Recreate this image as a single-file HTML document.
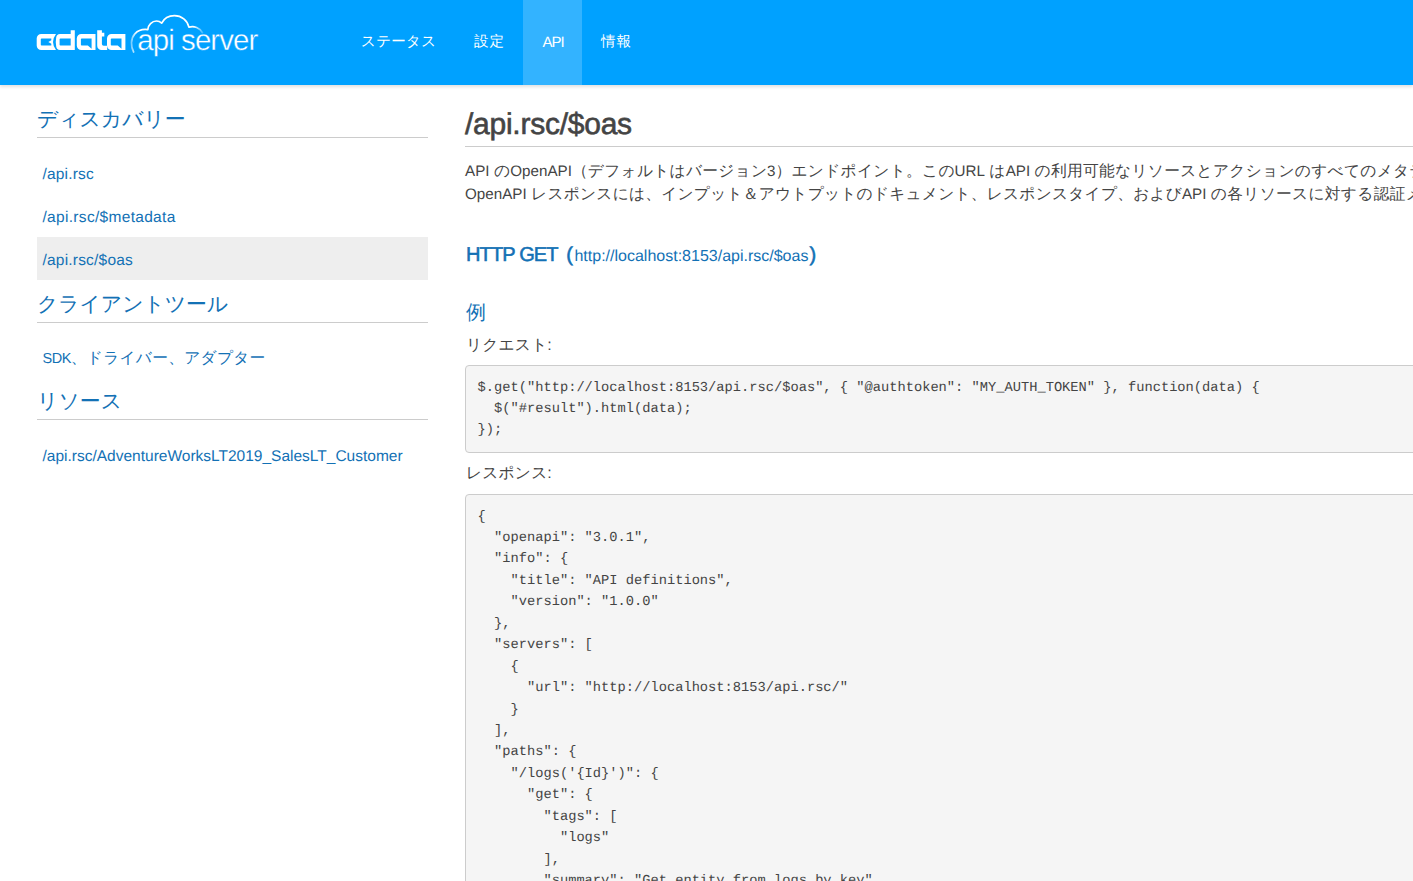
<!DOCTYPE html>
<html lang="ja">
<head>
<meta charset="utf-8">
<title>CData API Server</title>
<style>
*{box-sizing:border-box}
html,body{margin:0;padding:0}
body{width:1413px;height:881px;overflow:hidden;background:#fff;font-family:"Liberation Sans",sans-serif;font-size:16px;color:#444;position:relative;text-rendering:geometricPrecision}
a{text-decoration:none;color:#1371b5}
.j{display:inline-block;text-align:justify;text-align-last:justify;white-space:nowrap;vertical-align:baseline;letter-spacing:0}
#hdr{position:absolute;left:0;top:0;width:1413px;height:85px;background:#00a1ff;box-shadow:0 2px 3px rgba(0,0,0,.12)}
#logo{position:absolute;left:30px;top:10px}
#nav{position:absolute;left:342px;top:0;margin:0;padding:0;list-style:none;height:85px;white-space:nowrap}
#nav li{position:absolute;top:0;height:85px;line-height:83px;color:#fff;font-size:15px;text-align:center}
#nav li .j{font-size:14.5px}
#nav li.on{background:#33b3ff}
#side{position:absolute;left:37px;top:85px;width:391px}
.sh{position:absolute;left:0;width:391px;height:34px;border-bottom:1px solid #ccc;color:#1371b5;font-size:20.8px;line-height:32px;margin:0;font-weight:400;white-space:nowrap}
.si{position:absolute;left:0;width:391px;height:43px;line-height:43px;padding-left:5.5px;padding-top:2px;font-size:15.5px;color:#1371b5;white-space:nowrap}
.si.on{background:#eee}
.si .j{font-size:15.75px}
#main{position:absolute;left:465px;top:85px;width:1400px}
h1{position:absolute;left:0;top:17px;width:1400px;height:45px;margin:0;border-bottom:1px solid #ccc;font-size:30px;font-weight:400;line-height:45px;color:#444;-webkit-text-stroke:0.6px #444;letter-spacing:-0.25px;white-space:nowrap}
p.d{position:absolute;left:0;top:75px;margin:0;font-size:16px;line-height:23px;white-space:nowrap;color:#444}
p.d .j,.lb .j{font-size:15.75px}
.l{font-size:15.2px}
h2.hh{position:absolute;left:1px;top:155px;margin:0;font-size:20px;font-weight:400;line-height:30px;color:#1371b5;white-space:nowrap;-webkit-text-stroke:.55px #1371b5}
h2.hh a{font-size:16px;font-weight:400;-webkit-text-stroke:0;margin:0 1px 0 1.5px}
h2.hh .hg{letter-spacing:-.85px}
h4{position:absolute;left:1px;top:213px;margin:0;font-size:20px;font-weight:400;line-height:30px;color:#1371b5}
.lb{position:absolute;left:1px;margin:0;font-size:16px;line-height:23px;color:#444;white-space:nowrap}
pre{position:absolute;left:0;margin:0;width:1400px;padding:11.6px 11px 10px 11.6px;border:1px solid #ccc;border-radius:4px;background:#f5f5f5;font-family:"Liberation Mono",monospace;font-size:13.72px;line-height:21.43px;color:#444;white-space:pre;overflow:hidden}
</style>
</head>
<body>
<div id="hdr">
<svg id="logo" width="260" height="60" viewBox="30 10 260 60">
<defs><linearGradient id="cg" gradientUnits="userSpaceOnUse" x1="130" y1="0" x2="204" y2="0"><stop offset="0" stop-color="#fff" stop-opacity=".35"/><stop offset=".09" stop-color="#fff" stop-opacity="1"/><stop offset=".86" stop-color="#fff" stop-opacity="1"/><stop offset="1" stop-color="#fff" stop-opacity=".15"/></linearGradient></defs>
<g fill="#fff" fill-rule="evenodd">
<path d="M41.2 34H56Q50 42 56 50H41.2A4.5 4.5 0 0 1 36.7 45.5V38.5A4.5 4.5 0 0 1 41.2 34ZM41.6 38.4H51.3V40.3L48.3 42L51.3 43.7V45.6H41.6A.8 .8 0 0 1 40.8 44.8V39.2A.8 .8 0 0 1 41.6 38.4Z"/>
<path d="M60 34H70.7V30.2H74.8V50H60C57.6 50 56.6 48.5 56.2 46.5Q55.3 42 56.2 37.5C56.6 35.5 57.6 34 60 34ZM60.4 38.4H70.7V45.6H60.4A.8 .8 0 0 1 59.6 44.8V39.2A.8 .8 0 0 1 60.4 38.4Z"/>
<path d="M81.3 34H95.5V50H81.3A4.5 4.5 0 0 1 76.8 45.5V38.5A4.5 4.5 0 0 1 81.3 34ZM81.7 38.4H91.6V48.8L87.8 45.6H81.7A.8 .8 0 0 1 80.9 44.8V39.2A.8 .8 0 0 1 81.7 38.4Z"/>
<path d="M97.2 30.2H101.9V32.8H104.3V36.4H101.9V44A1.8 1.8 0 0 0 103.7 45.8H107.2V50H101.5A4.3 4.3 0 0 1 97.2 45.7Z"/>
<path d="M111.5 34H125.4V50H111.5A4.5 4.5 0 0 1 107 45.5V38.5A4.5 4.5 0 0 1 111.5 34ZM111.6 38.4H121.5V48.8L117.7 45.6H111.6A.8 .8 0 0 1 110.8 44.8V39.2A.8 .8 0 0 1 111.6 38.4Z"/>
</g>
<path d="M133.6 52C130.6 46.5 130.4 38.5 134.8 33.8C138.3 30.2 143.4 29 147.8 29.6C148 25 152 21 156.5 21C158.5 21 160.3 21.8 161.7 23.1C164 18.5 169 15.6 174.4 15.6C181.5 15.6 187.5 20.5 188.9 27.2C194 25.6 200 27.6 202.5 32.6" fill="none" stroke="url(#cg)" stroke-width="1.7" stroke-linejoin="round" stroke-linecap="round"/>
<text x="137.3" y="49.8" font-family="Liberation Sans, sans-serif" font-size="29.5" fill="#fff" stroke="#00a1ff" stroke-width=".4" textLength="121" lengthAdjust="spacing">api server</text>
</svg>
<ul id="nav">
<li style="left:0;width:113px"><span class="j" style="width:75px">ステータス</span></li>
<li style="left:113px;width:68px"><span class="j" style="width:30px">設定</span></li>
<li class="on" style="left:181px;width:59px"><span style="letter-spacing:-1px;margin-right:-1px;position:relative;top:1px">API</span></li>
<li style="left:240px;width:68px"><span class="j" style="width:30px">情報</span></li>
</ul>
</div>
<div id="side">
<h3 class="sh" style="top:19px"><span class="j" style="width:148px">ディスカバリー</span></h3>
<div class="si" style="top:66px;letter-spacing:.17px">/api.rsc</div>
<div class="si" style="top:109px;letter-spacing:.31px">/api.rsc/$metadata</div>
<div class="si on" style="top:152px;letter-spacing:.2px">/api.rsc/$oas</div>
<h3 class="sh" style="top:204px"><span class="j" style="width:191px">クライアントツール</span></h3>
<div class="si" style="top:250px"><span style="font-size:14.5px;letter-spacing:-.5px">SDK</span><span class="j" style="width:194.5px">、ドライバー、アダプター</span></div>
<h3 class="sh" style="top:301px"><span class="j" style="width:85px">リソース</span></h3>
<div class="si" style="top:348px">/api.rsc/AdventureWorksLT2019_SalesLT_Customer</div>
</div>
<div id="main">
<h1>/api.rsc/$oas</h1>
<p class="d"><span class="l">API</span> <span class="j" style="width:16.3px">の</span><span class="l">OpenAPI</span><span class="j" style="width:195.2px">（デフォルトはバージョン</span><span class="l">3</span><span class="j" style="width:179px">）エンドポイント。この</span><span class="l">URL</span> <span class="j" style="width:16.3px">は</span><span class="l">API</span> <span class="j" style="width:536.9px">の利用可能なリソースとアクションのすべてのメタデータを取得します。</span><br><span class="l">OpenAPI</span> <span class="j" style="width:650.8px">レスポンスには、インプット＆アウトプットのドキュメント、レスポンスタイプ、および</span><span class="l">API</span> <span class="j" style="width:374.2px">の各リソースに対する認証メソッドが含まれます。</span></p>
<h2 class="hh"><span class="hg">HTTP GET</span> <span class="par" style="margin-left:3px">(</span><a>http://localhost:8153/api.rsc/$oas</a><span class="par">)</span></h2>
<h4>例</h4>
<div class="lb" style="top:249px"><span class="j" style="width:81.3px">リクエスト</span>:</div>
<pre style="top:280px;height:88px">$.get("http://localhost:8153/api.rsc/$oas", { "@authtoken": "MY_AUTH_TOKEN" }, function(data) {
  $("#result").html(data);
});</pre>
<div class="lb" style="top:377px"><span class="j" style="width:81.3px">レスポンス</span>:</div>
<pre style="top:409px;height:500px">{
  "openapi": "3.0.1",
  "info": {
    "title": "API definitions",
    "version": "1.0.0"
  },
  "servers": [
    {
      "url": "http://localhost:8153/api.rsc/"
    }
  ],
  "paths": {
    "/logs('{Id}')": {
      "get": {
        "tags": [
          "logs"
        ],
        "summary": "Get entity from logs by key",
        "operationId": "getlogsById",
</pre>
</div>
</body>
</html>
